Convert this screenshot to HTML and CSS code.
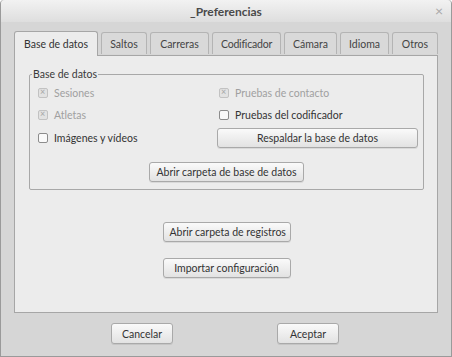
FILE: index.html
```html
<!DOCTYPE html>
<html lang="es">
<head>
  <meta charset="UTF-8">
  <title>_Preferencias</title>
  <link rel="stylesheet" href="styles.css">
</head>
<body>
  <div class="window">
    <div class="titlebar">
      <span class="title">_Preferencias</span>
      <span class="close">&#215;</span>
    </div>
    <div class="main">
      <div class="tabs">
        <div class="tab active tab-db">Base de datos</div>
        <div class="tab tab-s">Saltos</div>
        <div class="tab tab-c">Carreras</div>
        <div class="tab tab-cod">Codificador</div>
        <div class="tab tab-cam">Cámara</div>
        <div class="tab tab-i">Idioma</div>
        <div class="tab tab-o">Otros</div>
      </div>
      <div class="panel">
        <fieldset class="frame">
          <legend>Base de datos</legend>
          <div class="grid">
            <label class="check disabled"><span class="box"></span>Sesiones</label>
            <label class="check disabled right"><span class="box"></span>Pruebas de contacto</label>
            <label class="check disabled"><span class="box"></span>Atletas</label>
            <label class="check right"><span class="box"></span>Pruebas del codificador</label>
            <label class="check"><span class="box"></span>Imágenes y vídeos</label>
            <button class="btn wide">Respaldar la base de datos</button>
          </div>
          <div class="center">
            <button class="btn">Abrir carpeta de base de datos</button>
          </div>
        </fieldset>
        <div class="stack">
          <button class="btn fixed">Abrir carpeta de registros</button>
          <button class="btn fixed">Importar configuración</button>
        </div>
      </div>
      <div class="actions">
        <button class="btn action">Cancelar</button>
        <button class="btn action">Aceptar</button>
      </div>
    </div>
  </div>
</body>
</html>
```

FILE: styles.css
```css
* { box-sizing: border-box; }

body {
  margin: 0;
  font-family: "Lato", "Open Sans", sans-serif;
  font-size: 10.5px;
  color: #3c3c3c;
}

.window {
  width: 452px;
  height: 357px;
  background-color: #d6d6d6;
  border: 1px solid #9a9a9a;
  border-top: none;
  border-radius: 4px 4px 0 0;
  display: flex;
  flex-direction: column;
}

.titlebar {
  height: 22px;
  display: flex;
  align-items: center;
  justify-content: center;
  position: relative;
  background: linear-gradient(#f2f2f2, #dedede);
  border-radius: 4px 4px 0 0;
}

.title {
  font-weight: bold;
  font-size: 12px;
  color: #4a4a4a;
}

.close {
  position: absolute;
  right: 8px;
  top: 2px;
  color: #a8a8a8;
  font-size: 14px;
}

.main {
  padding: 9px 13px 0 13px;
}

/* tabs */
.tabs {
  display: flex;
  align-items: flex-end;
  gap: 3px;
  height: 24px;
  position: relative;
  z-index: 1;
}

.tab {
  flex-shrink: 0;
  white-space: nowrap;
  height: 22px;
  display: flex;
  align-items: center;
  justify-content: center;
  background-color: #d9d9d9;
  border: 1px solid #b4b4b4;
  border-bottom: none;
  border-radius: 3px 3px 0 0;
  margin-bottom: 1px;
  color: #444;
}

.tab.active {
  height: 25px;
  background-color: #ececec;
  border-color: #a6a6a6;
  margin-bottom: -1px;
  color: #333;
}

.tab-db { width: 84px; }
.tab-s { width: 46px; }
.tab-c { width: 59px; }
.tab-cod { width: 69px; letter-spacing: -0.2px; }
.tab-cam { width: 53px; }
.tab-i { width: 49px; }
.tab-o { width: 46px; }

.panel {
  height: 258px;
  background-color: #ececec;
  border: 1px solid #a6a6a6;
  padding: 12px 13px 0 14px;
}

/* frame */
.frame {
  margin: 0;
  height: 122px;
  border: 1px solid #a8a8a8;
  border-radius: 2px;
  padding: 2px 0 0 8px;
}

.frame legend {
  padding: 0 1px;
  margin-left: -6px;
  color: #3a3a3a;
}

.grid {
  display: grid;
  grid-template-columns: 179px 201px;
  grid-template-rows: 22px 22px 24px;
  align-items: center;
}

.check {
  display: flex;
  align-items: center;
  gap: 6px;
  white-space: nowrap;
  color: #333;
}

.check.right { margin-left: 2px; }

.box {
  width: 10px;
  height: 10px;
  border: 1px solid #8c8c8c;
  border-radius: 2px;
  background-color: #fafafa;
  position: relative;
}

.check.disabled { color: #a0a0a0; }

.check.disabled .box {
  border-color: #c2c2c2;
  background-color: #e2e2e2;
}

.check.disabled .box::after {
  content: "\00d7";
  position: absolute;
  left: 1px;
  top: -3px;
  font-size: 9px;
  color: #a6a6a6;
}

/* buttons */
.btn {
  font-family: inherit;
  font-size: 10.5px;
  color: #333;
  height: 20px;
  padding: 0 6px;
  white-space: nowrap;
  background: linear-gradient(#fafafa, #e2e2e2);
  border: 1px solid #a9a9a9;
  border-radius: 3px;
  box-shadow: 0 1px 0 rgba(0, 0, 0, 0.08);
}

.btn.wide { width: 201px; }

.center {
  display: flex;
  justify-content: center;
  margin-top: 12px;
  margin-left: -8px;
}

.stack {
  display: flex;
  flex-direction: column;
  align-items: center;
  gap: 16px;
  margin-top: 32px;
}

.btn.fixed { width: 128px; }

.actions {
  display: flex;
  justify-content: center;
  gap: 104px;
  margin-top: 10px;
  padding-right: 2px;
}

.btn.action {
  width: 62px;
  height: 21px;
}
```
